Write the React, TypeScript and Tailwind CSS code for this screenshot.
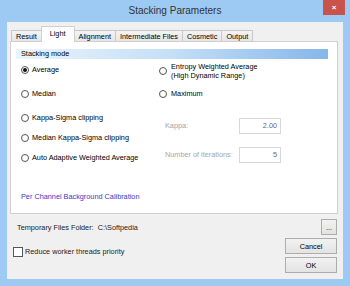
import React from "react"

const FONT = "font-['Liberation_Sans',Arial,sans-serif]"

function Radio({ checked = false }: { checked?: boolean }) {
  return (
    <span className="flex h-[8px] w-[8px] shrink-0 items-center justify-center rounded-full border border-[#555] bg-white">
      {checked && <span className="h-[4px] w-[4px] rounded-full bg-[#111]" />}
    </span>
  )
}

function Tab({ label, active = false }: { label: string; active?: boolean }) {
  if (active) {
    return (
      <div className="relative z-10 -mb-px -ml-px flex h-[16px] items-start border border-b-0 border-[#d0d0d0] bg-white px-[8px] pt-[2px] leading-[9px]">
        {label}
      </div>
    )
  }
  return (
    <div className="flex h-[11px] items-center border border-b-0 border-l-0 border-[#c8c8c8] bg-linear-to-b from-[#f4f4f4] to-[#e6e6e6] px-[4px] leading-[9px] first:border-l">
      {label}
    </div>
  )
}

function Button({ label, w }: { label: string; w: string }) {
  return (
    <div
      className={`flex h-[16px] items-center justify-center border border-[#adadad] bg-linear-to-b from-[#f2f2f2] to-[#e3e3e3] leading-[9px] ${w}`}
    >
      {label}
    </div>
  )
}

function SpinBox({ value }: { value: string }) {
  return (
    <div className="flex h-[16px] w-[42px] items-center justify-end border border-[#d8d8d8] bg-white pr-[3px] text-[#6a6a6a]">
      {value}
    </div>
  )
}

export default function App() {
  return (
    <div className={`flex h-[286px] w-[350px] flex-col bg-[#9dcaf3] text-[7.3px] text-black ${FONT}`}>
      {/* title bar */}
      <div className="relative flex h-[22px] shrink-0 items-center justify-center">
        <span className="text-[10px] leading-none text-[#333]">Stacking Parameters</span>
        <div className="absolute right-[5px] top-0 flex h-[15px] w-[22px] items-center justify-center bg-[#c9524d] text-[8px] font-bold leading-none text-white">
          ×
        </div>
      </div>

      {/* client area */}
      <div className="mx-[7px] mb-[7px] flex flex-1 flex-col bg-[#f0f0f0]">
        {/* tabs */}
        <div className="ml-[4px] mt-[4px] flex h-[15px] items-end">
          <Tab label="Result" />
          <Tab label="Light" active />
          <Tab label="Alignment" />
          <Tab label="Intermediate Files" />
          <Tab label="Cosmetic" />
          <Tab label="Output" />
        </div>

        {/* tab panel */}
        <div className="ml-[3px] flex h-[173px] w-[328px] flex-col border border-[#d0d0d0] bg-white">
          <div className="ml-[5px] mt-[7px] flex h-[10px] w-[312px] items-center bg-linear-to-r from-[#eaf4fc] via-[#c4dff6] to-[#86b6ea] pl-[5px] leading-none">
            Stacking mode
          </div>

          <div className="mt-[1px] flex">
            {/* left column */}
            <div className="ml-[10px] flex w-[138px] flex-col">
              <div className="flex h-[20px] items-center gap-[3px]">
                <Radio checked />
                <span>Average</span>
              </div>
              <div className="mt-[4px] flex h-[20px] items-center gap-[3px]">
                <Radio />
                <span>Median</span>
              </div>
              <div className="mt-[4px] flex h-[20px] items-center gap-[3px]">
                <Radio />
                <span>Kappa-Sigma clipping</span>
              </div>
              <div className="flex h-[20px] items-center gap-[3px]">
                <Radio />
                <span>Median Kappa-Sigma clipping</span>
              </div>
              <div className="flex h-[20px] items-center gap-[3px]">
                <Radio />
                <span>Auto Adaptive Weighted Average</span>
              </div>
            </div>

            {/* right column */}
            <div className="flex flex-col">
              <div className="flex h-[22px] items-center gap-[4px]">
                <Radio />
                <span className="leading-[9px]">
                  Entropy Weighted Average
                  <br />
                  (High Dynamic Range)
                </span>
              </div>
              <div className="mt-[2px] flex h-[20px] items-center gap-[4px]">
                <Radio />
                <span>Maximum</span>
              </div>
              <div className="mt-[12px] flex h-[20px] items-center">
                <span className="ml-[6px] w-[74px] text-[#a6a6a6]">Kappa:</span>
                <SpinBox value="2.00" />
              </div>
              <div className="mt-[9px] flex h-[20px] items-center">
                <span className="ml-[6px] w-[74px] text-[#a6a6a6]">Number of iterations:</span>
                <SpinBox value="5" />
              </div>
            </div>
          </div>

          <div className="ml-[10px] mt-[19px] flex h-[20px] items-center text-[#3a3ac8]">
            Per Channel Background Calibration
          </div>
        </div>

        {/* folder row */}
        <div className="mt-[5px] flex h-[16px] items-center justify-between pr-[6px]">
          <span className="ml-[10px] pt-[2px] text-[#222]">Temporary Files Folder:&nbsp;&nbsp;C:\Softpedia</span>
          <Button label="..." w="w-[16px]" />
        </div>

        {/* bottom row */}
        <div className="flex justify-between pr-[6px]">
          <div className="ml-[6px] mt-[12px] flex h-[10px] items-center gap-[2px]">
            <span className="h-[10px] w-[10px] border border-[#555] bg-white" />
            <span className="text-[#222]">Reduce worker threads priority</span>
          </div>
          <div className="mt-[3px] flex flex-col gap-[3px]">
            <Button label="Cancel" w="w-[52px]" />
            <Button label="OK" w="w-[52px]" />
          </div>
        </div>
      </div>
    </div>
  )
}
